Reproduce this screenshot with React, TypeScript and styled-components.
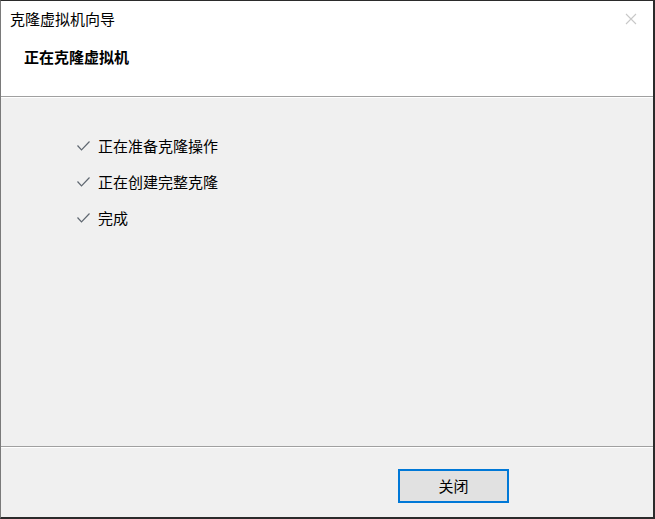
import styled, { createGlobalStyle } from "styled-components";

const GlobalStyle = createGlobalStyle`
  html, body {
    margin: 0;
    padding: 0;
    background: #ffffff;
  }
  * {
    box-sizing: border-box;
  }
`;

const Window = styled.div`
  width: 655px;
  height: 519px;
  display: flex;
  flex-direction: column;
  border-top: 1px solid #2b2b2b;
  border-left: 1px solid #7a7a7a;
  border-right: 2px solid #2b2b2b;
  border-bottom: 2px solid #2b2b2b;
  font-family: "Noto Sans CJK SC", "Noto Sans", sans-serif;
  font-size: 15px;
  color: #000000;
  background: #f0f0f0;
`;

const Header = styled.div`
  background: #ffffff;
  height: 95px;
  flex-shrink: 0;
  display: flex;
  flex-direction: column;
`;

const TitleBar = styled.div`
  height: 36px;
  display: flex;
  align-items: center;
  justify-content: space-between;
  padding: 0 0 0 9px;
`;

const WindowTitle = styled.span`
  line-height: 20px;
`;

const CloseButton = styled.div`
  width: 44px;
  height: 36px;
  display: flex;
  align-items: center;
  justify-content: center;
`;

const Heading = styled.h1`
  margin: 10px 0 0 23px;
  font-size: 15px;
  font-weight: 700;
  line-height: 20px;
`;

const Divider = styled.div`
  height: 2px;
  flex-shrink: 0;
  border-top: 1px solid #a0a0a0;
  border-bottom: 1px solid #ffffff;
`;

const Content = styled.div`
  flex: 1;
  display: flex;
  flex-direction: column;
  gap: 16px;
  padding: 38px 0 0 75px;
`;

const Step = styled.div`
  display: flex;
  align-items: center;
  gap: 7px;
  height: 20px;
  line-height: 20px;
`;

const Footer = styled.div`
  height: 69px;
  flex-shrink: 0;
  display: flex;
  align-items: flex-start;
  padding: 21px 0 0 397px;
`;

const Button = styled.button`
  width: 111px;
  height: 34px;
  border: 2px solid #0078d7;
  background: #e1e1e1;
  font-family: inherit;
  font-size: 15px;
  color: #000000;
  padding: 0;
  line-height: 20px;
`;

const Check = () => (
  <svg width="15" height="12" viewBox="0 0 15 12">
    <path d="M1.5 5.5 L5.5 9.8 L13.5 1.5" fill="none" stroke="#5f6770" strokeWidth="1.2" />
  </svg>
);

const CloseIcon = () => (
  <svg width="12" height="12" viewBox="0 0 12 12">
    <path d="M1 1 L11 11 M11 1 L1 11" stroke="#c8c8c8" strokeWidth="1.1" />
  </svg>
);

const steps = ["正在准备克隆操作", "正在创建完整克隆", "完成"];

export default function App() {
  return (
    <>
      <GlobalStyle />
      <Window>
        <Header>
          <TitleBar>
            <WindowTitle>克隆虚拟机向导</WindowTitle>
            <CloseButton>
              <CloseIcon />
            </CloseButton>
          </TitleBar>
          <Heading>正在克隆虚拟机</Heading>
        </Header>
        <Divider />
        <Content>
          {steps.map((s) => (
            <Step key={s}>
              <Check />
              <span>{s}</span>
            </Step>
          ))}
        </Content>
        <Divider />
        <Footer>
          <Button>关闭</Button>
        </Footer>
      </Window>
    </>
  );
}
